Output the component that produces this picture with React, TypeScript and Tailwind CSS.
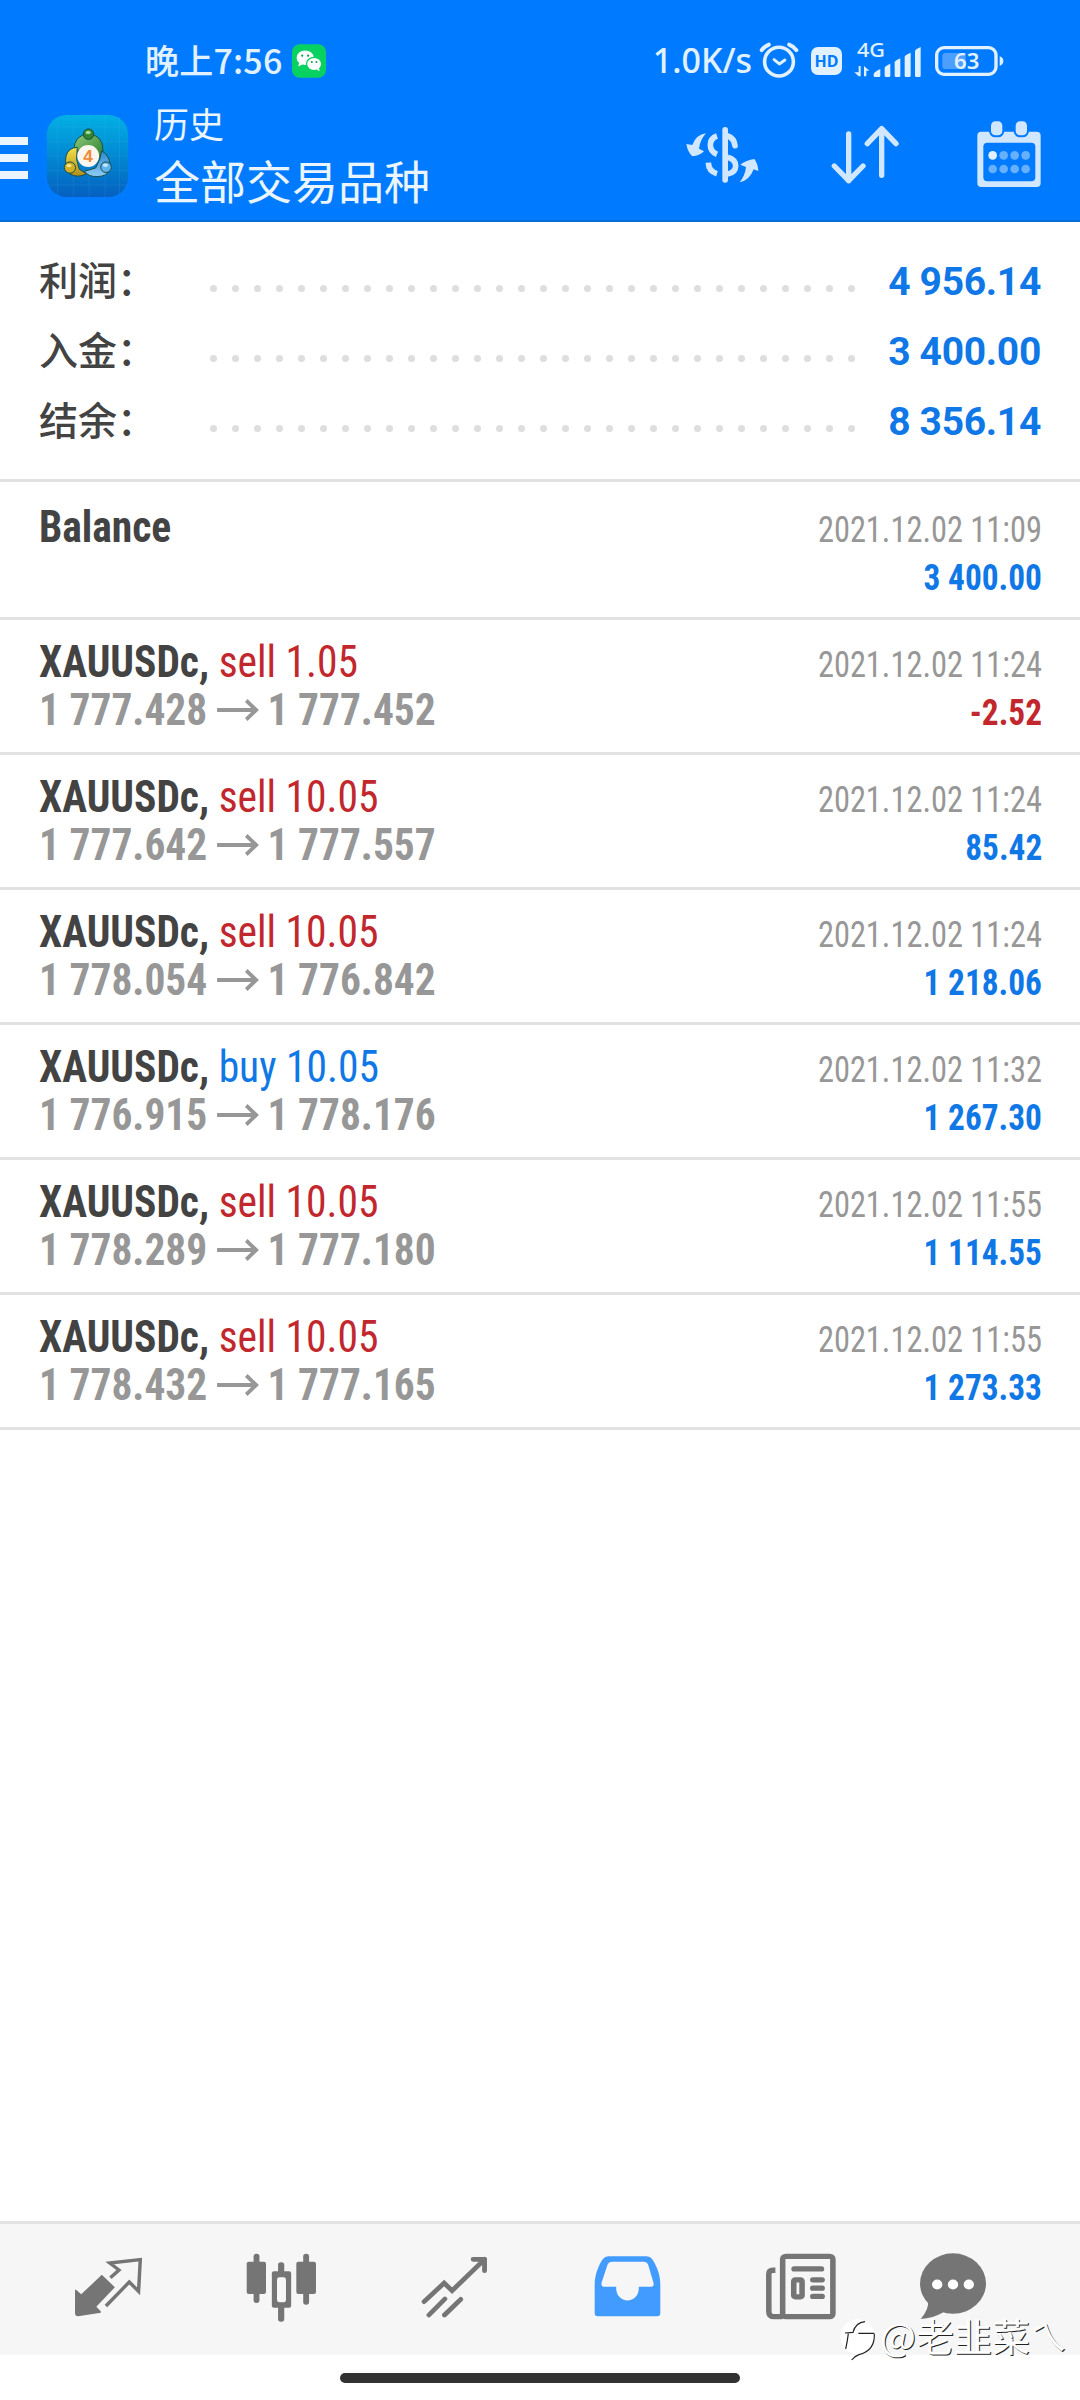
import React from "react"

type Deal = {
    side?: "buy" | "sell"
    volume?: string
    open?: string
    close?: string
    time: string
    amount: string
}

const summary = [
    { label: "利润：", value: "4 956.14" },
    { label: "入金：", value: "3 400.00" },
    { label: "结余：", value: "8 356.14" },
]

const deals: Deal[] = [
    { time: "2021.12.02 11:09", amount: "3 400.00" },
    { side: "sell", volume: "1.05", open: "1 777.428", close: "1 777.452", time: "2021.12.02 11:24", amount: "-2.52" },
    { side: "sell", volume: "10.05", open: "1 777.642", close: "1 777.557", time: "2021.12.02 11:24", amount: "85.42" },
    { side: "sell", volume: "10.05", open: "1 778.054", close: "1 776.842", time: "2021.12.02 11:24", amount: "1 218.06" },
    { side: "buy", volume: "10.05", open: "1 776.915", close: "1 778.176", time: "2021.12.02 11:32", amount: "1 267.30" },
    { side: "sell", volume: "10.05", open: "1 778.289", close: "1 777.180", time: "2021.12.02 11:55", amount: "1 114.55" },
    { side: "sell", volume: "10.05", open: "1 778.432", close: "1 777.165", time: "2021.12.02 11:55", amount: "1 273.33" },
]

const WechatIcon = () => (
    <svg className="ml-[10px] h-[34px] w-[34px]" viewBox="24 22 103 102">
        <rect x="24" y="22" width="103" height="102" rx="24" fill="#07d160" />
        <ellipse cx="64" cy="63" rx="26" ry="22" fill="#fff" />
        <path d="M46 76l-3 14 15-8z" fill="#fff" />
        <ellipse cx="91" cy="82" rx="23" ry="20" fill="#fff" stroke="#07d160" strokeWidth="4" />
        <path d="M98 98l9 6-1-12z" fill="#fff" />
        <g fill="#07a04c">
            <circle cx="55" cy="57" r="3.4" />
            <circle cx="73" cy="57" r="3.4" />
            <circle cx="84" cy="76" r="3" />
            <circle cx="98" cy="76" r="3" />
        </g>
    </svg>
)

const AlarmIcon = () => (
    <svg className="mb-[2px] ml-[7px] h-[36px] w-[40px]" viewBox="418 64 120 110" fill="none" stroke="#e2f1ff" strokeLinecap="round" strokeLinejoin="round">
        <circle cx="478" cy="124" r="44" strokeWidth="11" />
        <path d="M463 118l16 13 17-12" strokeWidth="9" />
        <path d="M425 89q9-12 22-17M509 72q14 5 22 17" strokeWidth="12" />
    </svg>
)

const SignalIcon = () => (
    <svg className="mb-[13px] ml-[12px] h-[46px] w-[68px]" viewBox="702 32 204 138">
        <text x="711" y="108" fontSize="58" fontFamily="'Noto Sans', sans-serif" fontWeight="500" fill="#e2f1ff" textLength="84" lengthAdjust="spacingAndGlyphs">4G</text>
        <g fill="#e2f1ff">
            <path d="M716 134h6v31h-6l-13-12h13zM732 134l16 14h-9v17h-7z" />
            <path d="M761 158q0-5 20-15v20q0 4-4 4h-12q-4 0-4-4z" />
            <path d="M794 139q0-4 17-12v36q0 4-4 4h-9q-4 0-4-4z" />
            <path d="M824 123q0-4 17-12v52q0 4-4 4h-9q-4 0-4-4z" />
            <path d="M854 106q0-4 18-12v69q0 4-4 4h-10q-4 0-4-4z" />
            <path d="M885 89q0-4 17-12v86q0 4-4 4h-9q-4 0-4-4z" />
        </g>
    </svg>
)

const BatteryIcon = () => (
    <svg className="ml-[13px] h-[30px] w-[69px]" viewBox="944 75 207 90">
        <rect x="949" y="80" width="178" height="80" rx="22" fill="none" stroke="#e2f1ff" strokeWidth="10" />
        <path d="M976 96h60v48h-60q-10 0-10-10v-28q0-10 10-10z" fill="#4d9fff" />
        <path d="M1138 106q11 3 11 14t-11 14z" fill="#e2f1ff" />
        <text x="1001" y="145" fontSize="66" fontFamily="'Noto Sans', sans-serif" fontWeight="600" fill="#e2f1ff" textLength="76" lengthAdjust="spacingAndGlyphs">63</text>
    </svg>
)

const MenuIcon = () => (
    <div className="mt-[4px] flex w-[28px] flex-col gap-[9px]">
        <span className="h-[8px] bg-[#eaf5ff]"></span>
        <span className="h-[8px] bg-[#eaf5ff]"></span>
        <span className="h-[8px] bg-[#eaf5ff]"></span>
    </div>
)

const AppLogo = () => (
    <svg className="ml-[18px] h-[82px] w-[83px]" viewBox="20 28 246 248">
        <defs>
            <linearGradient id="sky" x1="0" y1="0" x2="0" y2="1">
                <stop offset="0" stopColor="#02b0e4" />
                <stop offset="0.5" stopColor="#0288d2" />
                <stop offset="1" stopColor="#0560c0" />
            </linearGradient>
            <linearGradient id="green" x1="0" y1="0" x2="1" y2="1">
                <stop offset="0" stopColor="#8fca7c" />
                <stop offset="1" stopColor="#2a7f2c" />
            </linearGradient>
            <linearGradient id="gold" x1="0" y1="0" x2="0" y2="1">
                <stop offset="0" stopColor="#f5e04a" />
                <stop offset="1" stopColor="#b08e18" />
            </linearGradient>
            <linearGradient id="azure" x1="0" y1="0" x2="0" y2="1">
                <stop offset="0" stopColor="#2b86cf" />
                <stop offset="1" stopColor="#8fcdf6" />
            </linearGradient>
        </defs>
        <rect x="20" y="28" width="246" height="248" rx="60" fill="url(#sky)" />
        <path d="M52 32v240M100 28v248M148 28v248M196 28v248M240 34v236M20 64h246M20 108h246M20 152h246M20 196h246M20 240h246" stroke="#5fc4f2" strokeOpacity="0.2" strokeWidth="2" />
        <g stroke="#174f4a" strokeWidth="3" strokeLinejoin="round">
            <path d="M102 134q0-44 44-50 44 6 44 52l-8 26-24-22-40-6-14 8z" fill="url(#green)" />
            <path d="M112 126q-26 0-34 26-6 28 12 54 22 14 50 0l-22-14-8-30z" fill="url(#gold)" />
            <path d="M186 136q28 16 26 56-10 22-38 22-28 2-40-16l34-10 12-26z" fill="url(#azure)" />
            <circle cx="146" cy="86" r="16" fill="#35852f" />
            <circle cx="90" cy="187" r="17" fill="#d1ae24" />
            <circle cx="199" cy="186" r="16" fill="#5fb2ea" />
        </g>
        <ellipse cx="145" cy="81" rx="8" ry="5" fill="#a7d99a" />
        <ellipse cx="87" cy="181" rx="8" ry="5" fill="#f7e98c" />
        <ellipse cx="197" cy="180" rx="8" ry="5" fill="#c2e6fd" />
        <circle cx="145" cy="152" r="33" fill="#fdf6ee" />
        <text x="145" y="171" textAnchor="middle" fontSize="52" fontWeight="700" fontFamily="'Liberation Sans', sans-serif" fill="#f08a35">4</text>
    </svg>
)

const CurrencyIcon = () => (
    <svg className="mb-[4px] h-[57px] w-[73px]" viewBox="197 317 219 171">
        <g fill="#d0e7ff">
            <path d="M257 339q-30 4-41 35l-18-3q4 24 18 37 22-1 35-15l-15-8q3-26 21-46z" />
            <path d="M358 486q30-6 42-39l14 5q-1-22-12-36-24 3-42 17l17 7q-2 24-19 46z" />
            <rect x="306" y="320" width="17" height="167" rx="8" />
        </g>
        <g fill="none" stroke="#d0e7ff" strokeWidth="17">
            <path d="M290 347q-20 7-20 27 0 20 20 28" />
            <path d="M264 427q1 26 26 33" />
            <path d="M322 347q20 7 22 29" strokeLinecap="round" />
            <path d="M322 411q24 7 24 26t-24 24" />
        </g>
    </svg>
)

const SortIcon = () => (
    <svg className="mb-[3px] ml-[72px] h-[59px] w-[68px]" viewBox="633 317 204 177" fill="none" stroke="#d0e7ff" strokeWidth="16" strokeLinecap="round" strokeLinejoin="round">
        <path d="M686 344v140M643 440l43 44 43-44" />
        <path d="M785 468V328M742 373l43-45 43 45" />
    </svg>
)

const CalendarIcon = () => (
    <svg className="mb-[4px] ml-[78px] h-[66px] w-[64px]" viewBox="1069 304 192 198">
        <path fillRule="evenodd" fill="#d0e7ff" d="M1082 336h166q12 0 12 12v142q0 12-12 12h-166q-12 0-12-12V348q0-12 12-12zM1100 369q-12 0-12 12v92q0 12 12 12h132q12 0 12-12v-92q0-12-12-12z" />
        <g fill="#d0e7ff" stroke="#007bff" strokeWidth="6">
            <rect x="1108" y="302" width="40" height="48" rx="16" />
            <rect x="1182" y="302" width="40" height="48" rx="16" />
        </g>
        <g fill="#66b0ff">
            <circle cx="1116" cy="407" r="13" fill="#e2f1ff" />
            <circle cx="1149" cy="407" r="13" />
            <circle cx="1182" cy="407" r="13" />
            <circle cx="1215" cy="407" r="13" />
            <circle cx="1116" cy="448" r="13" />
            <circle cx="1149" cy="448" r="13" />
            <circle cx="1182" cy="448" r="13" />
            <circle cx="1215" cy="448" r="13" />
        </g>
    </svg>
)

const QuotesIcon = () => (
    <svg className="mr-[2px] mb-[2px] h-[60px] w-[68px]" viewBox="216 174 198 180" preserveAspectRatio="none">
        <path d="M219 272l3 0 15 14 60-59 38 38-54 58 13 14v4l-66 11q-9 0-9-9z" fill="#757575" />
        <path d="M322 236l25-23-27-21 89-10-5 95-27-28-68 72" fill="none" stroke="#757575" strokeWidth="10" />
    </svg>
)

const ChartIcon = () => (
    <svg className="h-[69px] w-[71px]" viewBox="714 160 206 207" preserveAspectRatio="none" fill="#757575">
        <rect x="736" y="162" width="17" height="148" rx="8" />
        <rect x="716" y="186" width="56" height="97" rx="6" />
        <rect x="807" y="188" width="18" height="178" rx="8" />
        <rect x="789" y="215" width="56" height="109" rx="6" />
        <rect x="804" y="233" width="26" height="75" rx="7" fill="#f6f6f6" />
        <rect x="880" y="162" width="17" height="153" rx="8" />
        <rect x="860" y="186" width="57" height="97" rx="6" />
    </svg>
)

const TradeIcon = () => (
    <svg className="mb-[2px] h-[62px] w-[67px]" viewBox="1222 168 194 186" preserveAspectRatio="none" fill="none" stroke="#757575" strokeWidth="14" strokeLinecap="round">
        <path d="M1231 305l58-56 23 23 94-94" />
        <path d="M1373 178h33v34" strokeLinejoin="round" />
        <path d="M1291 297l-46 48M1337 298l-47 47" />
    </svg>
)

const HistoryIcon = () => (
    <svg className="mb-[2px] h-[61px] w-[67px]" viewBox="156 169 196 184" preserveAspectRatio="none">
        <path fillRule="evenodd" fill="#429bff" d="M198 170h112q10 0 16 8c14 22 24 47 24 77v87q0 9-9 9H167q-9 0-9-9v-87c0-30 12-60 24-77q6-8 16-8zM208 186q-9 0-12 8l-18 56q-2 12 10 12h33v6a33 35 0 0 0 66 0v-6h33q13 0 10-12l-16-56q-3-8-12-8z" />
    </svg>
)

const NewsIcon = () => (
    <svg className="mb-[2px] h-[67px] w-[71px]" viewBox="655 160 205 202" preserveAspectRatio="none" fill="none" stroke="#757575" strokeWidth="16">
        <rect x="706" y="170" width="145" height="182" rx="9" />
        <path d="M685 212h-7q-12 0-12 12v112q0 16 16 16h24" />
        <path d="M739 208h79M793 241h27M793 266h27M793 291h27" strokeLinecap="round" />
        <rect x="738" y="241" width="24" height="51" rx="4" />
    </svg>
)

const ChatIcon = () => (
    <svg className="mb-[2px] h-[67px] w-[68px]" viewBox="1100 160 198 202" preserveAspectRatio="none">
        <path d="M1126 305q4 24-21 54 36-2 66-20z" fill="#757575" />
        <ellipse cx="1199" cy="252" rx="96" ry="91" fill="#757575" />
        <circle cx="1153" cy="255" r="15" fill="#fff" />
        <circle cx="1199" cy="255" r="15" fill="#fff" />
        <circle cx="1245" cy="255" r="15" fill="#fff" />
    </svg>
)

const DealRow: React.FC<{ deal: Deal }> = ({ deal }) => {
    const amountColor = deal.amount.startsWith("-") ? "text-[#c1272d]" : "text-[#0f78e6]"
    const sideColor = deal.side === "buy" ? "text-[#0f78e6]" : "text-[#c1272d]"

    return (
        <li className="flex h-[135px] flex-col border-b-[3px] border-[#e2e2e2] pt-[18px] pr-[38px] pl-[39px] text-[44px] leading-[48px]">
            <div className="flex h-[48px] items-baseline justify-between">
                <span className="origin-left scale-x-[0.943] font-bold text-[#434343]">
                    {deal.side ? "XAUUSDc, " : "Balance"}
                    {deal.side && <span className={`font-normal ${sideColor}`}>{deal.side} {deal.volume}</span>}
                </span>
                <span className="origin-right scale-x-[0.9] text-[36px] text-[#979797]">{deal.time}</span>
            </div>
            <div className="flex h-[48px] items-baseline justify-between">
                <span className="flex origin-left scale-x-[0.942] items-baseline font-bold text-[#979797]">
                    {deal.open ?? "\u00a0"}
                    {deal.open && (
                        <svg className="mr-[9px] ml-[10px] h-[22px] w-[45px] self-center" viewBox="0 0 45 22" fill="none" stroke="#979797" strokeWidth="4">
                            <path d="M0 11h42M31 1.5l10.500 9.500-10.500 9.500" />
                        </svg>
                    )}
                    {deal.close}
                </span>
                <span className={`origin-right scale-x-[0.925] text-[36px] font-bold ${amountColor}`}>{deal.amount}</span>
            </div>
        </li>
    )
}

const App: React.FC = () => {
    return (
        <div className="relative flex h-[2400px] w-[1080px] flex-col overflow-hidden bg-white font-['Roboto_Condensed','Noto_Sans_CJK_SC',sans-serif]">
            <header className="flex h-[222px] flex-col border-b-2 border-[#0a6cd8] bg-[#007bff]">
                <div className="flex h-[100px] items-center justify-between pt-[22px] pr-[76px] pl-[145px] text-[34px] font-medium text-[#e2f1ff]">
                    <div className="flex items-center font-['Noto_Sans_CJK_SC',sans-serif]">
                        <span className="mb-[3px] leading-[40px] tracking-[0.2px]">晚上7:56</span>
                        <WechatIcon />
                    </div>
                    <div className="flex items-center">
                        <span className="mb-[2px] font-['Noto_Sans',sans-serif] leading-[40px]">1.0K/s</span>
                        <AlarmIcon />
                        <span className="ml-[12px] flex h-[28px] w-[31px] items-center justify-center rounded-[7px] bg-[#e2f1ff] font-['Noto_Sans',sans-serif] text-[16px] font-bold text-[#007bff]">HD</span>
                        <SignalIcon />
                        <BatteryIcon />
                    </div>
                </div>
                <div className="flex h-[112px] items-center pr-[39px]">
                    <MenuIcon />
                    <AppLogo />
                    <div className="mb-[7px] ml-[25px] flex flex-1 flex-col font-['Noto_Sans_CJK_SC',sans-serif] text-[#eaf5ff]">
                        <span className="text-[35px] leading-[52px]">历史</span>
                        <span className="text-[46px] leading-[60px]">全部交易品种</span>
                    </div>
                    <CurrencyIcon />
                    <SortIcon />
                    <CalendarIcon />
                </div>
            </header>

            <section className="flex h-[260px] flex-col border-b-[3px] border-[#e2e2e2] pt-[24px]">
                {summary.map((item) => (
                    <div key={item.label} className="flex h-[70px] items-center pr-[39px] pl-[39px]">
                        <span className="mb-[6px] w-[171px] font-['Noto_Sans_CJK_SC',sans-serif] text-[39px] leading-[64px] font-medium text-[#434343]">{item.label}</span>
                        <span className="mt-[14px] flex w-[645px] justify-between">
                            {Array.from({ length: 30 }, (_, i) => (
                                <span key={i} className="h-[7px] w-[7px] rounded-full bg-[#dedede]"></span>
                            ))}
                        </span>
                        <span className="mt-[2px] flex-1 text-right font-['Roboto',sans-serif] text-[39px] leading-[68px] font-bold tracking-[-0.3px] text-[#0f78e6]">{item.value}</span>
                    </div>
                ))}
            </section>

            <ul className="flex-1 pt-[3px]">
                {deals.map((deal, i) => (
                    <DealRow key={i} deal={deal} />
                ))}
            </ul>

            <nav className="flex h-[134px] items-center border-t-[3px] border-[#e2e2e2] bg-[#f6f6f6] pb-[4px] pl-[22px]">
                <div className="flex w-[173px] justify-center"><QuotesIcon /></div>
                <div className="flex w-[173px] justify-center"><ChartIcon /></div>
                <div className="flex w-[173px] justify-center"><TradeIcon /></div>
                <div className="flex w-[173px] justify-center"><HistoryIcon /></div>
                <div className="flex w-[173px] justify-center"><NewsIcon /></div>
                <div className="flex w-[132px] justify-center"><ChatIcon /></div>
            </nav>
            <div className="flex h-[45px] justify-center pt-[18px]">
                <span className="h-[10px] w-[400px] rounded-full bg-[#323232]"></span>
            </div>

            {/* user mark over the tab bar */}
            <div className="absolute right-[12px] bottom-[34px] flex items-center">
                <svg className="h-[44px] w-[38px]" viewBox="22 62 114 132" fill="none">
                    <circle cx="78" cy="118" r="52" fill="#fff" />
                    <path d="M100 73q-28 2-36 32l-24 2M50 109q-3 24-8 46M80 108h48M128 110q2 50-46 62-12 4-22 16" stroke="#222" strokeWidth="3.500" />
                </svg>
                <span className="mb-[9px] ml-[3px] font-['Noto_Sans_CJK_SC',sans-serif] text-[38px] leading-[44px] text-white [text-shadow:1px_1px_0_#222]">@老韭菜ㄟ</span>
            </div>
        </div>
    )
}

export default App
